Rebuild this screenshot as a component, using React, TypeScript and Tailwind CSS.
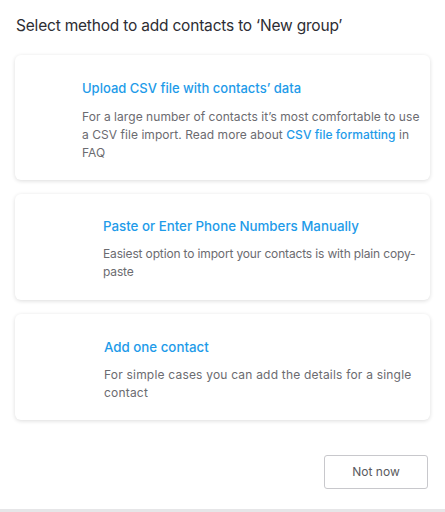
export default function App() {
  const card = "bg-white rounded-[6px] shadow-[0_1px_4px_rgba(0,0,0,0.14)] mx-[15px]";
  return (
    <div className="w-[445px] h-[512px] bg-white relative overflow-hidden" style={{ fontFamily: "Inter, 'Noto Sans', sans-serif" }}>
      <div className="pt-[16px] pl-[16px] text-[15.5px] leading-[20px] text-[#2d2d33] tracking-[-0.2px]">
        Select method to add contacts to ‘New group’
      </div>
      <div className="mt-[19px] flex flex-col gap-[14px]">
        <div className={`${card} h-[125px] pl-[67px] pr-[10px] pt-[24px]`}>
          <div className="text-[13px] leading-[18px] font-medium text-[#1e9be9]">Upload CSV file with contacts’ data</div>
          <div className="mt-[11px] text-[12px] leading-[18px] tracking-[0.05px] text-[#6b6b70]">
            For a large number of contacts it’s most comfortable to use a CSV file import. Read more about{" "}
            <span className="text-[#1e9be9] font-medium">CSV file formatting</span> in FAQ
          </div>
        </div>
        <div className={`${card} h-[106px] pl-[88px] pr-[12px] pt-[23px]`}>
          <div className="text-[13.3px] leading-[18px] font-medium text-[#1e9be9]">Paste or Enter Phone Numbers Manually</div>
          <div className="mt-[10px] text-[12px] leading-[18px] tracking-[-0.15px] text-[#6b6b70]">
            Easiest option to import your contacts is with plain copy-paste
          </div>
        </div>
        <div className={`${card} h-[106px] pl-[89px] pr-[12px] pt-[24px]`}>
          <div className="text-[13.3px] leading-[18px] font-medium text-[#1e9be9]">Add one contact</div>
          <div className="mt-[10px] text-[12px] leading-[18px] tracking-[0.2px] text-[#6b6b70]">
            For simple cases you can add the details for a single contact
          </div>
        </div>
      </div>
      <div className="flex justify-end pr-[17px] mt-[35px]">
        <button className="w-[104px] h-[34px] border border-[#c8c8cc] rounded-[3px] text-[12px] text-[#5a5a60] bg-white">Not now</button>
      </div>
      <div className="absolute left-0 right-0 bottom-0 h-[3px] bg-[#e6e6e8]" />
    </div>
  );
}
